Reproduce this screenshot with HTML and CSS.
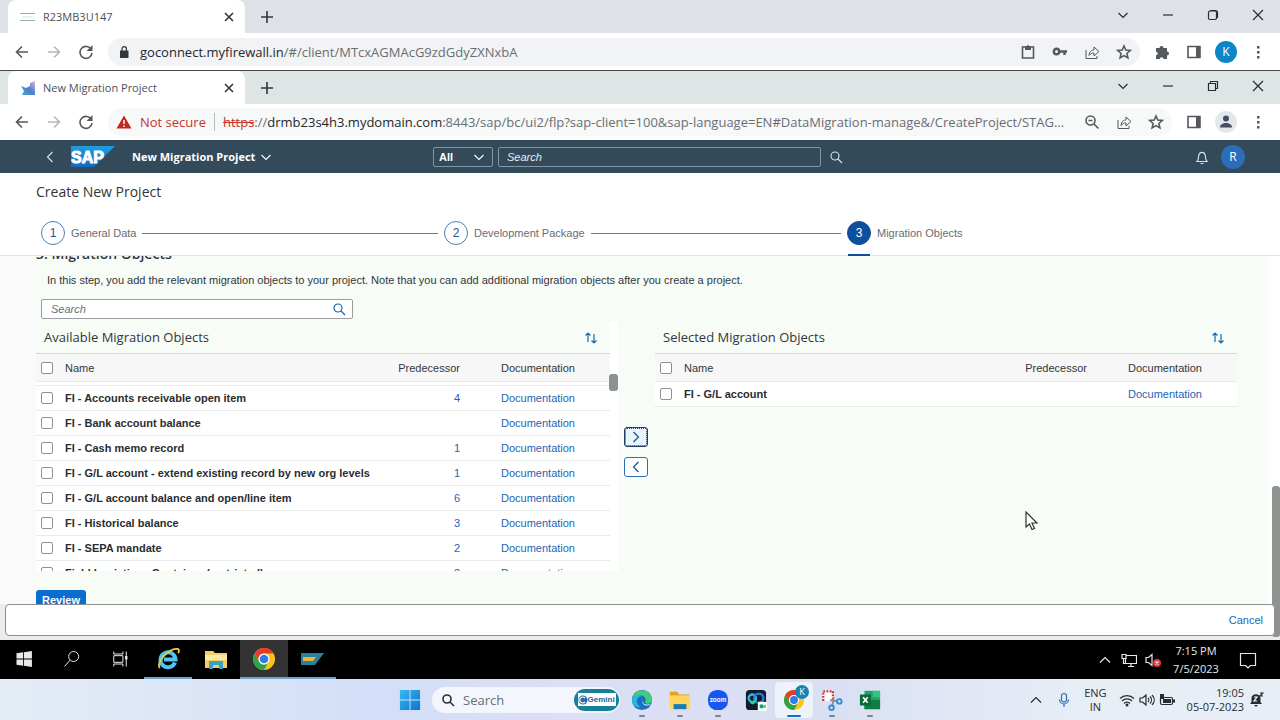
FILE: index.html
```
<!DOCTYPE html>
<html lang="en">
<head>
    <meta charset="UTF-8">
    <meta name="viewport" content="width=device-width, initial-scale=1.0">
    <title>New Migration Project</title>
    <link rel="stylesheet" href="styles.css">
</head>
<body>
    <svg class="sprite" aria-hidden="true">
        <symbol id="back" viewBox="0 0 16 16"><path d="M14 8H3M8 2.500L2.500 8L8 13.500"/></symbol>
        <symbol id="forward" viewBox="0 0 16 16"><path d="M2 8h11M8 2.500L13.500 8L8 13.500"/></symbol>
        <symbol id="reload" viewBox="0 0 16 16"><path d="M13.300 5.500A6 6 0 1 0 14 9"/><path class="fill" d="M14.500 1v6h-6z"/></symbol>
        <symbol id="close" viewBox="0 0 16 16"><path d="M4 4l8 8M12 4l-8 8"/></symbol>
        <symbol id="plus" viewBox="0 0 16 16"><path d="M8 2v12M2 8h12"/></symbol>
        <symbol id="down" viewBox="0 0 16 16"><path d="M3.500 6l4.500 4.500l4.500-4.500"/></symbol>
        <symbol id="up" viewBox="0 0 16 16"><path d="M3 10.500l5-5l5 5"/></symbol>
        <symbol id="left" viewBox="0 0 16 16"><path d="M10.500 3l-5 5l5 5"/></symbol>
        <symbol id="right" viewBox="0 0 16 16"><path d="M5.500 3l5 5l-5 5"/></symbol>
        <symbol id="minimize" viewBox="0 0 16 16"><path d="M3 8h10"/></symbol>
        <symbol id="exit" viewBox="0 0 16 16"><path d="M3 3l10 10M13 3L3 13"/></symbol>
        <symbol id="maximize" viewBox="0 0 16 16"><rect x="3.500" y="4" width="8" height="8.500" rx="1.500"/><path d="M5 3.500h5.500a2 2 0 0 1 2 2V11"/></symbol>
        <symbol id="restore" viewBox="0 0 16 16"><path d="M3.500 5.500h7v7h-7zM5.500 5.500v-2h7v7h-2"/></symbol>
        <symbol id="share" viewBox="0 0 16 16"><path d="M2 6v8.500h11V12M5 11.500C5.500 7.500 7.500 6 10 6V3l5 4.500l-5 4.500V9C8 9 6.500 9.500 5 11.500z"/></symbol>
        <symbol id="star" viewBox="0 0 16 16"><path d="M8 2l1.800 4.100l4.500.4l-3.400 3l1 4.400L8 11.600l-3.900 2.300l1-4.400l-3.400-3l4.500-.4z"/></symbol>
        <symbol id="panel" viewBox="0 0 16 16"><path d="M2 2.500h12v11H2z"/><path class="fill" d="M10 2h4v12h-4z"/></symbol>
        <symbol id="dots" viewBox="0 0 16 16"><path class="fill" d="M7 2h2.500v2.500H7zM7 7h2.500v2.500H7zM7 12h2.500v2.500H7z"/></symbol>
        <symbol id="search" viewBox="0 0 16 16"><circle cx="7" cy="7" r="4"/><path d="M10 10l4 4"/></symbol>
        <symbol id="sort" viewBox="0 0 16 16"><path d="M5 12V3M2.500 5.500L5 3l2.500 2.500M11 4v9M8.500 10.500L11 13l2.500-2.500"/></symbol>
        <symbol id="chrome" viewBox="0 0 24 24">
            <circle cx="12" cy="12" r="11" fill="#fbc31c"/>
            <path fill="#e33b2e" d="M2.500 6.500A11 11 0 0 1 21.500 6.500H12A5.500 5.500 0 0 0 7.200 14.700z"/>
            <path fill="#2ba24c" d="M2.500 6.500L7.200 14.700A5.500 5.500 0 0 0 16.700 14.700L12 23A11 11 0 0 1 2.500 6.500z"/>
            <circle cx="12" cy="12" r="5.500" fill="#fff"/>
            <circle cx="12" cy="12" r="4.300" fill="#2d7de8"/>
        </symbol>
    </svg>

    <!-- outer browser -->
    <div class="tabs">
        <div class="tab">
            <svg class="favicon" viewBox="0 0 16 16"><path d="M0 4.500h15M0 11.500h15" stroke="#9fb0b5" fill="none"/><path d="M2 8h10" stroke="#dde4e6" fill="none"/></svg>
            <span class="tab-title">R23MB3U147</span>
            <button class="icon-btn dark" aria-label="Close tab"><svg><use href="#close"/></svg></button>
        </div>
        <button class="icon-btn dark" aria-label="New tab"><svg><use href="#plus"/></svg></button>
        <div class="window-btns">
            <button aria-label="Tab search"><svg><use href="#down"/></svg></button>
            <button aria-label="Minimize"><svg><use href="#minimize"/></svg></button>
            <button aria-label="Maximize"><svg><use href="#maximize"/></svg></button>
            <button aria-label="Close"><svg><use href="#exit"/></svg></button>
        </div>
    </div>
    <div class="toolbar">
        <button class="icon-btn" aria-label="Back"><svg><use href="#back"/></svg></button>
        <button class="icon-btn off" aria-label="Forward"><svg><use href="#forward"/></svg></button>
        <button class="icon-btn" aria-label="Reload"><svg><use href="#reload"/></svg></button>
        <div class="address">
            <svg class="lock" viewBox="0 0 16 16"><path class="fill" d="M4 6.500h8.500V14H4z"/><path d="M6 7V4.800a2.200 2.200 0 0 1 4.400 0V7"/></svg>
            <span class="url"><b>goconnect.myfirewall.in</b>/#/client/MTcxAGMAcG9zdGdyZXNxbA</span>
            <button class="icon-btn" aria-label="Clipboard"><svg viewBox="0 0 16 16"><path d="M2.500 3h11v11h-11z"/><path class="fill" d="M5 2h2l1-1.500L9 2h2v4H5z"/></svg></button>
            <button class="icon-btn" aria-label="Passwords"><svg viewBox="0 0 16 16"><circle cx="4.500" cy="7.500" r="2.700" stroke-width="2.400"/><path stroke-width="2.400" d="M7 7.500h8M12.500 8v3"/></svg></button>
            <button class="icon-btn thin" aria-label="Share"><svg><use href="#share"/></svg></button>
            <button class="icon-btn" aria-label="Bookmark"><svg><use href="#star"/></svg></button>
        </div>
        <button class="icon-btn" aria-label="Extensions"><svg viewBox="0 0 16 16"><path class="fill" d="M2 4h3.500a2 2 0 1 1 4 0H13v3.500a2 2 0 1 1 0 4V15H9.500a1.800 1.800 0 0 0-3.600 0H2v-3.700a1.800 1.800 0 0 0 0-3.600z"/></svg></button>
        <button class="icon-btn" aria-label="Side panel"><svg><use href="#panel"/></svg></button>
        <button class="avatar user" aria-label="Profile">K</button>
        <button class="icon-btn" aria-label="Menu"><svg><use href="#dots"/></svg></button>
    </div>

    <!-- remote browser -->
    <div class="tabs remote">
        <div class="tab">
            <svg class="favicon" viewBox="0 0 16 16"><defs><linearGradient id="fav" x1="1" y1="0" x2="0" y2="1"><stop offset="0" stop-color="#d5b4e6"/><stop offset="0.500" stop-color="#4f7fc6"/><stop offset="1" stop-color="#4aa6cf"/></linearGradient></defs><path fill="url(#fav)" d="M1 6l5 2l4-2V3l5-2v14H2l2-4z"/></svg>
            <span class="tab-title">New Migration Project</span>
            <button class="icon-btn dark" aria-label="Close tab"><svg><use href="#close"/></svg></button>
        </div>
        <button class="icon-btn dark" aria-label="New tab"><svg><use href="#plus"/></svg></button>
        <div class="window-btns">
            <button aria-label="Tab search"><svg><use href="#down"/></svg></button>
            <button aria-label="Minimize"><svg><use href="#minimize"/></svg></button>
            <button aria-label="Restore"><svg><use href="#restore"/></svg></button>
            <button aria-label="Close"><svg><use href="#exit"/></svg></button>
        </div>
    </div>
    <div class="toolbar remote">
        <button class="icon-btn" aria-label="Back"><svg><use href="#back"/></svg></button>
        <button class="icon-btn off" aria-label="Forward"><svg><use href="#forward"/></svg></button>
        <button class="icon-btn" aria-label="Reload"><svg><use href="#reload"/></svg></button>
        <div class="address">
            <svg class="warn" viewBox="0 0 16 16"><path fill="#c5281c" d="M8 1.500L15.500 14.500H.5z"/><path d="M8 6v4M8 11.500v1.500" stroke="#fff" stroke-width="1.500"/></svg>
            <span class="not-secure">Not secure</span>
            <span class="url"><s>https</s>://<b>drmb23s4h3.mydomain.com</b>:8443/sap/bc/ui2/flp?sap-client=100&amp;sap-language=EN#DataMigration-manage&amp;/CreateProject/STAG...</span>
            <button class="icon-btn" aria-label="Zoom"><svg viewBox="0 0 16 16"><circle cx="6.500" cy="6.500" r="4.500"/><path d="M10 10l4.500 4.500M4.500 6.500h4"/></svg></button>
            <button class="icon-btn thin" aria-label="Share"><svg><use href="#share"/></svg></button>
            <button class="icon-btn" aria-label="Bookmark"><svg><use href="#star"/></svg></button>
        </div>
        <button class="icon-btn" aria-label="Side panel"><svg><use href="#panel"/></svg></button>
        <button class="avatar guest" aria-label="Profile"><svg viewBox="0 0 16 16"><circle class="fill" cx="8" cy="4.500" r="3"/><path class="fill" d="M2 13.500c0-6 12-6 12 0z"/></svg></button>
        <button class="icon-btn" aria-label="Menu"><svg><use href="#dots"/></svg></button>
    </div>

    <header class="shell">
        <div class="shell-left">
            <button class="icon-btn" aria-label="Back"><svg><use href="#left"/></svg></button>
            <svg class="logo" viewBox="0 0 44 21" role="img" aria-label="SAP">
                <defs><linearGradient id="sap" x1="0" y1="0" x2="0" y2="1"><stop offset="0" stop-color="#1f9fe0"/><stop offset="1" stop-color="#1468bd"/></linearGradient></defs>
                <path fill="url(#sap)" d="M0 0h44L23 21H0z"/>
                <text x="0" y="17" class="logo-text">SAP</text>
            </svg>
            <button class="app-title">New Migration Project <svg><use href="#down"/></svg></button>
        </div>
        <form class="shell-search">
            <label class="scope"><select aria-label="Search scope"><option>All</option></select><svg><use href="#down"/></svg></label>
            <input type="text" placeholder="Search" aria-label="Search">
            <button type="button" class="icon-btn" aria-label="Search"><svg><use href="#search"/></svg></button>
        </form>
        <div class="shell-right">
            <button class="icon-btn" aria-label="Notifications"><svg viewBox="0 0 16 16"><path d="M3 12.500c2-2 1-4 2-7a3.200 3.200 0 0 1 6 0c1 3 0 5 2 7zM6.500 14.500h3"/></svg></button>
            <button class="avatar" aria-label="User">R</button>
        </div>
    </header>

    <section class="wizard">
        <h1>Create New Project</h1>
        <ol class="steps">
            <li><span class="num">1</span>General Data</li>
            <li><span class="num">2</span>Development Package</li>
            <li class="current"><span class="num">3</span>Migration Objects</li>
        </ol>
    </section>

    <div class="page">
        <main>
            <h2>3. Migration Objects</h2>
            <p>In this step, you add the relevant migration objects to your project. Note that you can add additional migration objects after you create a project.</p>
            <label class="filter"><input type="text" placeholder="Search" aria-label="Search migration objects"><svg><use href="#search"/></svg></label>

            <div class="lists">
                <section class="list available">
                    <div class="list-head"><h3>Available Migration Objects</h3><button class="icon-btn" aria-label="Sort"><svg><use href="#sort"/></svg></button></div>
                    <table>
                        <thead>
                            <tr><th class="check"><input type="checkbox" aria-label="Select all"></th><th>Name</th><th class="pred">Predecessor</th><th class="doc">Documentation</th></tr>
                        </thead>
                        <tbody>
                            <tr class="rest"><td colspan="4"></td></tr>
                            <tr><td><input type="checkbox" id="o1"></td><td><label for="o1">FI - Accounts receivable open item</label></td><td class="pred"><a href="#">4</a></td><td><a href="#">Documentation</a></td></tr>
                            <tr><td><input type="checkbox" id="o2"></td><td><label for="o2">FI - Bank account balance</label></td><td class="pred"></td><td><a href="#">Documentation</a></td></tr>
                            <tr><td><input type="checkbox" id="o3"></td><td><label for="o3">FI - Cash memo record</label></td><td class="pred"><a href="#">1</a></td><td><a href="#">Documentation</a></td></tr>
                            <tr><td><input type="checkbox" id="o4"></td><td><label for="o4">FI - G/L account - extend existing record by new org levels</label></td><td class="pred"><a href="#">1</a></td><td><a href="#">Documentation</a></td></tr>
                            <tr><td><input type="checkbox" id="o5"></td><td><label for="o5">FI - G/L account balance and open/line item</label></td><td class="pred"><a href="#">6</a></td><td><a href="#">Documentation</a></td></tr>
                            <tr><td><input type="checkbox" id="o6"></td><td><label for="o6">FI - Historical balance</label></td><td class="pred"><a href="#">3</a></td><td><a href="#">Documentation</a></td></tr>
                            <tr><td><input type="checkbox" id="o7"></td><td><label for="o7">FI - SEPA mandate</label></td><td class="pred"><a href="#">2</a></td><td><a href="#">Documentation</a></td></tr>
                            <tr><td><input type="checkbox" id="o8"></td><td><label for="o8">Field Logistics - Container (restricted)</label></td><td class="pred"><a href="#">2</a></td><td><a href="#">Documentation</a></td></tr>
                        </tbody>
                    </table>
                    <div class="list-thumb"></div>
                </section>
                <div class="move">
                    <button class="focused" aria-label="Add"><svg><use href="#right"/></svg></button>
                    <button aria-label="Remove"><svg><use href="#left"/></svg></button>
                </div>
                <section class="list">
                    <div class="list-head"><h3>Selected Migration Objects</h3><button class="icon-btn" aria-label="Sort"><svg><use href="#sort"/></svg></button></div>
                    <table>
                        <thead>
                            <tr><th class="check"><input type="checkbox" aria-label="Select all"></th><th>Name</th><th class="pred">Predecessor</th><th class="doc">Documentation</th></tr>
                        </thead>
                        <tbody>
                            <tr><td><input type="checkbox" id="s1"></td><td><label for="s1">FI - G/L account</label></td><td class="pred"></td><td><a href="#">Documentation</a></td></tr>
                        </tbody>
                    </table>
                </section>
            </div>
            <button class="review">Review</button>
        </main>
        <div class="page-thumb"></div>
        <footer><button>Cancel</button></footer>
        <svg class="cursor" viewBox="0 0 14 20"><path d="M1 1v15l3.500-3l2.500 5.500l2.500-1l-2.500-5.500H12z" fill="white" stroke="#333"/></svg>
    </div>

    <!-- remote taskbar -->
    <nav class="taskbar">
        <button aria-label="Start"><svg viewBox="0 0 24 24"><path class="fill" d="M3 5l8-1v7.500H3zM12 3.900L21.500 2.500v9H12zM3 12.500h8V20l-8-1zM12 12.500h9.500v9L12 20.100z"/></svg></button>
        <button aria-label="Search"><svg viewBox="0 0 24 24"><circle cx="14" cy="9" r="6"/><path d="M9.500 13.500L3 21"/></svg></button>
        <button aria-label="Task view"><svg viewBox="0 0 24 24"><path d="M4.500 8h11v8h-11zM4.500 3v3h11V3M4.500 21v-3h11v3M19.500 3v18"/><path class="fill" d="M18 8.500h3v4h-3z"/></svg></button>
        <button class="open" aria-label="Internet Explorer"><svg class="big" viewBox="0 0 24 24"><path d="M19 15.500a7.500 7.500 0 1 1 .5-3H8" stroke="#4dc4f2" stroke-width="4"/><path d="M4 21C-1 17 13 0 22 2c1.500.5 1 3 0 4" stroke="#f3cc3c" stroke-width="1.800"/></svg></button>
        <button aria-label="File Explorer"><svg class="big" viewBox="0 0 24 24"><path fill="#f2cf69" d="M1 4h8l2 2h12v15H1z"/><path fill="#ffe9a0" d="M1 8h22v5H1z"/><path fill="#37a4c4" d="M5 14h14v8h-4v-4H9v4H5z"/></svg></button>
        <button class="open active" aria-label="Chrome"><svg class="big"><use href="#chrome"/></svg></button>
        <button class="open" aria-label="SAP Logon"><svg class="big" viewBox="0 0 24 24"><path fill="#2d7f9f" d="M1 6h23l-9 12H1z"/><path fill="#e9b637" d="M3 10h13l-3 4H3z"/></svg></button>
        <div class="tray">
            <svg><use href="#up"/></svg>
            <svg viewBox="0 0 16 16"><path d="M5 3.500h10.500v8H4.500V7M7 14.500h6M10 12v2M1 2.500h4v4H1zM2.500 6.500v5h2"/></svg>
            <svg viewBox="0 0 16 16"><path d="M1 5.500h2.500l3.500-3v11l-3.500-3H1z"/><circle cx="12" cy="11" r="4" fill="#e8353e" stroke="none"/><path d="M10.500 9.500l3 3M13.500 9.500l-3 3"/></svg>
            <time>7:15 PM<br>7/5/2023</time>
            <svg class="note" viewBox="0 0 18 18"><path d="M1.500 2.500h15v12h-5L9 17l-2.500-2.500h-5z"/></svg>
        </div>
    </nav>

    <!-- host taskbar -->
    <nav class="dock">
        <div class="apps">
            <button aria-label="Start"><svg viewBox="0 0 24 24"><defs><linearGradient id="win" x1="0" y1="0" x2="1" y2="1"><stop offset="0" stop-color="#39b9ee"/><stop offset="1" stop-color="#0a74cf"/></linearGradient></defs><path fill="url(#win)" d="M1 1h10.500v10.500H1zM12.500 1H23v10.500H12.500zM1 12.500h10.500V23H1zM12.500 12.500H23V23H12.500z"/></svg></button>
            <label class="dock-search">
                <svg><use href="#search"/></svg>
                <input type="text" placeholder="Search" aria-label="Search Windows">
                <span class="gemini"><span><svg viewBox="0 0 10 10"><circle cx="5" cy="5" r="4.500" fill="#2a6aa8"/><path d="M7 3a3 3 0 1 0 0 4" stroke="#fff" fill="none"/></svg>Gemini</span></span>
            </label>
            <button class="run" aria-label="Edge"><svg viewBox="0 0 24 24"><circle cx="12" cy="12" r="11" fill="#1671c4"/><path fill="#3fcf7c" d="M2 8C5-1 22-1 23 12c0 4-5 5-8 3c3-4-1-9-6-8c-3 0-5 1-7 1z"/><path fill="#2fb5dc" d="M1.500 10c3-5 9-4 10-2c-6 0-7 8-1 12C4 21 0 15 1.500 10z"/><path fill="#e2edf9" d="M12 12c0 5 6 6 10 4c-3 4-11 2-10-4z"/></svg></button>
            <button class="run" aria-label="File Explorer"><svg viewBox="0 0 24 24"><path fill="#e3a21a" d="M1 3h8l2 3h11v5H1z"/><path fill="#ffd65c" d="M1 7h22v15H1z"/><path fill="#1b7bb8" d="M5 16.500h14V22H5z"/></svg></button>
            <button class="run" aria-label="Zoom"><svg viewBox="0 0 24 24"><rect x="1" y="1" width="22" height="22" rx="10" fill="#1557f0"/><text x="12" y="14.500" class="zoom-text">zoom</text></svg></button>
            <button aria-label="Webex"><svg viewBox="0 0 24 24"><rect x="1" y="1" width="22" height="22" rx="4" fill="#101c26"/><circle cx="8" cy="10" r="4" stroke="#32b6e6" stroke-width="2.500"/><circle cx="15" cy="10" r="5" stroke="#2a7be8" stroke-width="2.500"/><path d="M6 14c3 4 5 0 6-4" stroke="#35d27f" stroke-width="2"/><rect x="14" y="14" width="10" height="10" rx="2" fill="#fff"/><path fill="#12a05f" d="M16 17h4v4h-4zM20 19l2.500-2v4z"/></svg></button>
            <button class="run active" aria-label="Chrome"><svg><use href="#chrome"/></svg><span class="badge">K</span></button>
            <button class="run" aria-label="Snipping Tool"><svg viewBox="0 0 24 24"><path fill="#fff" d="M2 2h11v11H2z"/><path d="M2.500 13V2.500H13V12" stroke="#d1322a" stroke-width="2.400" stroke-dasharray="2 1.500"/><path d="M10 12l8 1.500M14 9l-1.500 9" stroke="#8a8f96" stroke-width="2"/><circle cx="20" cy="13.500" r="2.500" stroke="#2a8fd4" stroke-width="2"/><circle cx="11.500" cy="20.500" r="2.500" stroke="#2a8fd4" stroke-width="2"/></svg></button>
            <button class="run" aria-label="Excel"><svg viewBox="0 0 24 24"><path fill="#21a366" d="M6 2h17v20H6z"/><path fill="#33c481" d="M15 2h8v7h-8z"/><path fill="#107c41" d="M6 12h17v10H6z"/><path fill="#0b6b38" d="M1 6h12v12H1z"/><path d="M4.500 9l5 6M9.500 9l-5 6" stroke="#fff" stroke-width="1.800"/></svg></button>
        </div>
        <div class="status">
            <svg><use href="#up"/></svg>
            <svg class="mic" viewBox="0 0 16 16"><rect x="5.500" y="1.500" width="5" height="8.500" rx="2.500"/><path d="M3.500 7.500a4.500 4.500 0 0 0 9 0M8 12.500V15"/></svg>
            <span class="lang">ENG<br>IN</span>
            <div class="quick">
                <svg viewBox="0 0 16 16"><path d="M1 6.500a10 10 0 0 1 14 0M3 9a7 7 0 0 1 10 0M5 11.500a4 4 0 0 1 6 0"/><circle class="fill" cx="8" cy="13" r="1.500"/></svg>
                <svg viewBox="0 0 16 16"><path d="M1 6h2.500L7 3v10L3.500 10H1zM9 6c1 1 1 3 0 4M11 4.500c2 2 2 5 0 7M13 3c3 3 3 7 0 10"/></svg>
                <svg viewBox="0 0 16 16"><rect x="1.500" y="5.500" width="12" height="7" rx="1.500"/><path class="fill" d="M4 7h8v4H4zM14 7.500h2v3h-2zM1 2h4v5H1z"/></svg>
            </div>
            <time>19:05<br>05-07-2023</time>
            <svg class="bell" viewBox="0 0 16 16"><path class="fill" d="M2 12l1.500-2V6c0-5 9-5 9 0v4l1.500 2zM6 13h4l-2 2z"/><path d="M6 5h3L6 9h3" stroke="#fff"/><path d="M12 1h3l-3 3h3"/></svg>
        </div>
    </nav>
</body>
</html>
```
FILE: styles.css
```
* {
    box-sizing: border-box;
}
body {
    display: flex;
    flex-direction: column;
    height: 100vh;
    margin: 0;
    overflow: hidden;
    font-family: "Open Sans", "Noto Sans", sans-serif;
    font-size: 12px;
    color: #32363a;
    background: #fff;
}
h1, h2, h3, p, ol {
    margin: 0;
    padding: 0;
    font-weight: normal;
}
button, input, select {
    font: inherit;
    color: inherit;
    border: none;
    padding: 0;
    margin: 0;
    background: none;
}
a {
    color: #1a66b3;
    text-decoration: none;
}
svg {
    flex: none;
    width: 16px;
    height: 16px;
    fill: none;
    stroke: currentColor;
    stroke-width: 1.2;
}
.fill {
    fill: currentColor;
    stroke: none;
}
.sprite {
    display: none;
}
[fill^="#"], [fill^="url"] {
    stroke: none;
}

/* browser windows */
.tabs {
    display: flex;
    flex: none;
    height: 33px;
    padding-left: 8px;
    background: #dee1e5;
}
.tabs.remote {
    height: 34px;
    background: #dde5e5;
    border-top: 1px solid #4a4648;
}
.tab {
    display: flex;
    align-items: center;
    width: 237px;
    padding: 0 8px 0 12px;
    margin-right: 14px;
    gap: 7px;
    background: #fff;
    border-radius: 8px 8px 0 0;
}
.tab-title {
    flex: 1;
    font-size: 11px;
    color: #4d5156;
    white-space: nowrap;
}
.icon-btn {
    display: flex;
    flex: none;
    align-items: center;
    justify-content: center;
    width: 16px;
    color: #55585c;
}
.icon-btn svg {
    stroke-width: 1.6;
}
.icon-btn.dark {
    color: #33363a;
}
.icon-btn.off {
    color: #b4b7ba;
}
.icon-btn.thin svg {
    stroke-width: 1;
}
.window-btns {
    display: flex;
    margin-left: auto;
    height: 29px;
}
.window-btns button {
    display: flex;
    align-items: center;
    justify-content: center;
    width: 45px;
    color: #2a2c2f;
}
.toolbar {
    display: flex;
    flex: none;
    align-items: center;
    height: 37px;
    padding: 0 14px;
    gap: 16px;
    background: #fff;
}
.toolbar.remote {
    height: 36px;
}
.address {
    display: flex;
    flex: 1;
    align-items: center;
    min-width: 0;
    height: 28px;
    padding: 0 8px;
    margin: 0 -2px;
    gap: 16px;
    background: #f1f3f4;
    border-radius: 14px;
}
.remote .address {
    background: #f7f8f8;
}
.address .lock, .address .warn {
    margin-right: -8px;
}
.url {
    flex: 1;
    min-width: 0;
    overflow: hidden;
    white-space: nowrap;
    font-size: 13px;
    color: #6a6e73;
}
.url b {
    font-weight: normal;
    color: #26282b;
}
.url s, .not-secure {
    color: #c5352b;
}
.not-secure {
    flex: none;
    font-size: 13px;
    padding-right: 8px;
    margin-right: -8px;
    border-right: 1px solid #b9bcbe;
}
.avatar {
    display: flex;
    flex: none;
    align-items: center;
    justify-content: center;
    width: 24px;
    height: 24px;
    border-radius: 50%;
    color: #fff;
    background: #2a6ebb;
}
.toolbar .avatar {
    width: 22px;
    height: 22px;
    margin: 0 -3px;
}
.avatar.user {
    background: #0b86c9;
}
.avatar.guest {
    color: #454d66;
    background: #e3e7ea;
}

/* shell header */
.shell {
    display: grid;
    grid-template-columns: 1fr 414px 1fr;
    flex: none;
    align-items: center;
    height: 33px;
    color: #fff;
    background: #334a5a;
}
.shell .icon-btn {
    color: #d5e6f2;
}
.shell svg {
    stroke-width: 1.1;
}
.shell-left, .shell-right {
    display: flex;
    align-items: center;
}
.shell-left {
    padding-left: 42px;
    gap: 13px;
}
.shell-right {
    justify-content: flex-end;
    padding-right: 35px;
    gap: 11px;
}
.shell .logo {
    width: 44px;
    height: 21px;
}
.logo-text {
    font: bold 16px "Liberation Sans", sans-serif;
    fill: #fff;
    stroke: #fff;
    stroke-width: 1;
}
.app-title {
    display: flex;
    align-items: center;
    gap: 3px;
    margin-left: 4px;
    font-family: "Open Sans", sans-serif;
    font-weight: bold;
    font-size: 11px;
}
.shell-search {
    display: flex;
    align-items: center;
    gap: 5px;
    padding-right: 3px;
    font-family: "Liberation Sans", sans-serif;
    font-size: 11px;
}
.shell-search input {
    flex: 1;
    min-width: 0;
    height: 20px;
    padding: 0 8px;
    border: 1px solid #7f98a8;
    border-radius: 2px;
}
.shell-search .icon-btn {
    margin-left: 2px;
}
.scope {
    display: flex;
    align-items: center;
    width: 60px;
    height: 20px;
    padding: 0 5px;
    border: 1px solid #7f98a8;
    border-radius: 2px;
}
.scope select {
    flex: 1;
    appearance: none;
    font-weight: bold;
}
::placeholder {
    color: inherit;
    font-style: italic;
    opacity: 0.9;
}

/* wizard steps */
.wizard {
    flex: none;
    height: 83px;
    border-bottom: 1px solid #e3e6e5;
    background: #fff;
    font-family: "Liberation Sans", sans-serif;
    font-size: 11px;
}
.wizard h1 {
    padding: 9px 36px 0;
    font-family: "Open Sans", sans-serif;
    font-size: 14px;
    line-height: 20px;
}
.steps {
    display: grid;
    grid-template-columns: repeat(3, 1fr);
    padding: 13px 30px 0 41px;
    list-style: none;
    color: #6a6d70;
}
.steps li {
    display: flex;
    align-items: center;
    height: 36px;
    gap: 6px;
}
.steps li:not(.current)::after {
    content: "";
    flex: 1;
    height: 1px;
    margin-right: 6px;
    background: #4a7fb8;
}
.num {
    display: flex;
    align-items: center;
    justify-content: center;
    width: 24px;
    height: 24px;
    border: 1px solid #4a7fb8;
    border-radius: 50%;
    font-size: 12px;
    color: #1a56a0;
}
.current .num {
    position: relative;
    color: #fff;
    background: #0e4f9e;
    border-color: #0e4f9e;
}
.current .num::after {
    content: "";
    position: absolute;
    left: 0;
    right: 0;
    bottom: -12px;
    height: 2px;
    background: #0e4f9e;
}

/* page content */
.page {
    position: relative;
    display: flex;
    flex: 1;
    flex-direction: column;
    min-height: 0;
    padding-bottom: 4px;
    background: #ececec;
    font-family: "Liberation Sans", sans-serif;
    font-size: 11px;
}
main {
    flex: 1;
    min-height: 0;
    overflow: hidden;
    padding: 0 43px 0 36px;
    background: linear-gradient(to right, #fafafa 20px, #f7fcf7 40px calc(100% - 16px), #fff calc(100% - 8px));
}
main h2 {
    margin-top: -12px;
    font-family: "Open Sans", sans-serif;
    font-size: 14px;
    font-weight: 600;
    line-height: 20px;
}
main p {
    padding: 8px 11px 11px;
    line-height: 16px;
    white-space: nowrap;
}
.filter {
    display: flex;
    align-items: center;
    width: 312px;
    height: 20px;
    padding: 0 5px 0 9px;
    margin-left: 5px;
    border: 1px solid #9a9d9f;
    border-radius: 2px;
    background: #fff;
    color: #5c6063;
}
.filter input {
    flex: 1;
}
.filter svg {
    color: #1a66b3;
}
.lists {
    display: grid;
    grid-template-columns: 1fr 37px 1fr;
    height: 249px;
    margin-top: 3px;
}
.list {
    min-width: 0;
    overflow: hidden;
}
.available {
    position: relative;
    padding-right: 8px;
    background: linear-gradient(to left, #fff 9px, transparent 9px);
}
.list-thumb {
    position: absolute;
    top: 52px;
    right: 0;
    width: 9px;
    height: 17px;
    border-radius: 3px;
    background: #8f9190;
}
.list-head {
    display: flex;
    justify-content: space-between;
    height: 31px;
    padding: 0 11px 0 8px;
}
.list-head h3 {
    font-family: "Open Sans", sans-serif;
    font-size: 13px;
    line-height: 31px;
}
.list-head .icon-btn {
    color: #1a66b3;
}
.list-head svg {
    stroke-width: 1.2;
}
table {
    width: 100%;
    table-layout: fixed;
    border-collapse: collapse;
}
th {
    height: 28px;
    padding: 0;
    font-weight: normal;
    text-align: left;
    border-top: 1px solid #d5d9d6;
    background: #f7f7f7;
}
td {
    height: 25px;
    padding: 0;
    border-top: 1px solid #e8ebe9;
    border-bottom: 1px solid #e8ebe9;
    background: #fff;
    white-space: nowrap;
}
.rest td {
    height: 4px;
}
td label {
    font-weight: bold;
    color: #2a2d30;
}
.check {
    width: 29px;
}
.doc {
    width: 109px;
}
.pred {
    width: 130px;
    padding-right: 41px;
    text-align: right;
}
input[type="checkbox"] {
    display: block;
    appearance: none;
    width: 12px;
    height: 12px;
    margin-left: 5px;
    border: 1px solid #8d9194;
    border-radius: 2px;
    background: #fff;
}
.move {
    display: flex;
    flex-direction: column;
    gap: 10px;
    padding: 105px 7px 0 6px;
}
.move button {
    display: flex;
    align-items: center;
    justify-content: center;
    width: 24px;
    height: 20px;
    border: 1px solid #2a6ebb;
    border-radius: 3px;
    background: #fff;
    color: #1f4f86;
}
.move .focused {
    border-color: #1f3f66;
    background: #e9f4fc;
    outline: 1px dotted #1f3f66;
    outline-offset: -2px;
}
.review {
    width: 50px;
    height: 20px;
    margin-top: 19px;
    border-radius: 3px;
    background: #0a6ed1;
    color: #fff;
    font-weight: bold;
}
.page-thumb {
    position: absolute;
    right: 0;
    bottom: 3px;
    width: 8px;
    height: 151px;
    border-radius: 3px;
    background: #8f9390;
}
footer {
    position: relative;
    display: flex;
    flex: none;
    justify-content: flex-end;
    height: 32px;
    padding-right: 11px;
    margin: 0 5px;
    border: 1px solid #8b8e8c;
    border-radius: 4px;
    background: #fff;
    color: #1a66b3;
}
.cursor {
    position: absolute;
    left: 1025px;
    top: 255px;
    width: 14px;
    height: 20px;
}

/* remote taskbar */
.taskbar {
    display: flex;
    flex: none;
    height: 39px;
    background: #000;
    color: #e8e8e8;
}
.taskbar button {
    display: flex;
    align-items: center;
    justify-content: center;
    width: 48px;
    border-bottom: 2px solid transparent;
}
.taskbar button svg {
    width: 20px;
    height: 20px;
}
.taskbar button .big {
    width: 24px;
    height: 24px;
}
.taskbar .open {
    border-color: #6fa3cf;
}
.taskbar .active {
    background: #333;
}
.tray {
    display: flex;
    align-items: center;
    margin-left: auto;
    padding-right: 23px;
    gap: 8px;
}
.tray time {
    width: 54px;
    margin-right: 8px;
    font-size: 11px;
    line-height: 18px;
    text-align: center;
    white-space: nowrap;
}
.tray .note {
    width: 18px;
    height: 18px;
}

/* host taskbar */
.dock {
    display: grid;
    grid-template-columns: 1fr auto 1fr;
    flex: none;
    align-items: center;
    height: 41px;
    background: linear-gradient(to right, #e4edf5, #d3def8 30%, #dcdff4 45%, #d9e0f3 65%, #e8eef6 85%);
}
.apps {
    display: flex;
    align-items: center;
    grid-column: 2;
    height: 41px;
}
.apps button {
    position: relative;
    display: flex;
    align-items: center;
    justify-content: center;
    width: 38px;
    height: 36px;
}
.apps button > svg {
    width: 22px;
    height: 22px;
}
.apps .run::after {
    content: "";
    position: absolute;
    left: 16px;
    bottom: 1px;
    width: 6px;
    height: 2px;
    border-radius: 1px;
    background: #7d828c;
}
.apps .active {
    border-radius: 4px;
    background: #eef3fb;
}
.apps .active::after {
    left: 12px;
    width: 14px;
    background: #1272bd;
}
.badge {
    position: absolute;
    top: 3px;
    right: 4px;
    width: 14px;
    height: 14px;
    border-radius: 50%;
    background: #1585b8;
    color: #fff;
    font-size: 9px;
    line-height: 14px;
}
.dock-search {
    display: flex;
    align-items: center;
    width: 188px;
    height: 26px;
    margin: 0 3px;
    padding: 0 1px 0 8px;
    gap: 7px;
    border-radius: 13px;
    background: #f3f6fc;
    color: #2a2c2f;
}
.dock-search > svg {
    stroke-width: 1.6;
}
.dock-search input {
    flex: 1;
    min-width: 0;
    font-size: 13px;
    color: #5c6066;
}
.dock-search ::placeholder {
    font-style: normal;
}
.gemini {
    display: flex;
    align-items: center;
    justify-content: center;
    width: 45px;
    height: 22px;
    border-radius: 11px;
    background: #16809a;
}
.gemini span {
    display: flex;
    align-items: center;
    width: 38px;
    height: 13px;
    background: #fff;
    color: #1d5f9c;
    font: bold 8px "Liberation Sans", sans-serif;
}
.gemini svg {
    width: 10px;
    height: 10px;
}
.zoom-text {
    font: bold 7px "Liberation Sans", sans-serif;
    text-anchor: middle;
    fill: #fff;
    stroke: none;
}
.status {
    display: flex;
    align-items: center;
    justify-content: flex-end;
    padding-right: 16px;
    gap: 12px;
    font-size: 11px;
    line-height: 14px;
    color: #2a2c2f;
}
.status .mic {
    color: #2a6ebb;
}
.lang {
    text-align: center;
}
.quick {
    display: flex;
    gap: 4px;
}
.status time {
    text-align: right;
}
.status .bell {
    margin-left: -8px;
}
```
